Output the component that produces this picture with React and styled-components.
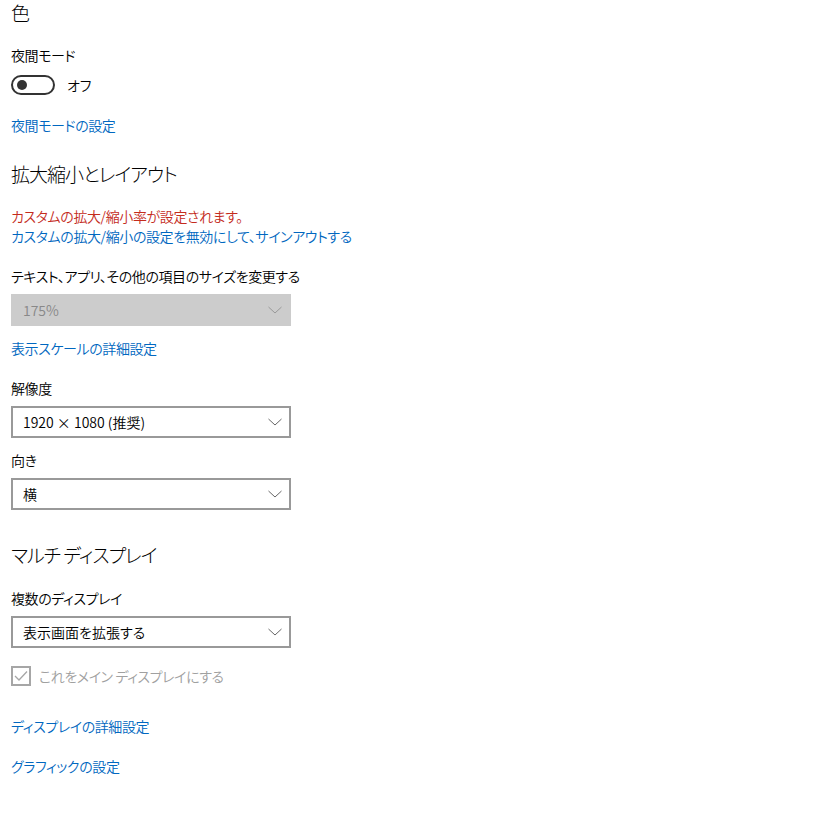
import React from 'react';
import styled, { createGlobalStyle } from 'styled-components';

const Global = createGlobalStyle`
    html, body {
        margin: 0;
        padding: 0;
        background: #fff;
    }
    body {
        font-family: "Noto Sans CJK JP", "Noto Sans", sans-serif;
        font-feature-settings: "palt";
        font-weight: 350;
        color: #000;
    }
`

const Page = styled.div`
    margin-top: -1px;
    padding: 0 0 40px 11px;
    width: 815px;
    box-sizing: border-box;
`

const Title = styled.h2`
    margin: ${p => p.top || 0}px 0 0;
    font-size: 19px;
    font-weight: 300;
    letter-spacing: -1px;
    line-height: 28px;
    height: 28px;
`

const Text = styled.div`
    margin-top: ${p => p.top || 0}px;
    font-size: 14px;
    letter-spacing: -0.4px;
    line-height: 20px;
    height: 20px;
    white-space: nowrap;
    color: ${p => p.color || '#000'};
`

const Link = styled.a`
    display: block;
    width: max-content;
    margin-top: ${p => p.top || 0}px;
    font-size: 14px;
    letter-spacing: -0.4px;
    line-height: 20px;
    height: 20px;
    color: #0067c0;
    text-decoration: none;
    cursor: pointer;
`

const ToggleRow = styled.div`
    display: flex;
    align-items: center;
    gap: 12px;
    margin-top: ${p => p.top || 0}px;
    height: 20px;
    font-size: 14px;
`

const Toggle = styled.div`
    width: 44px;
    height: 20px;
    box-sizing: border-box;
    border: 2px solid #333;
    border-radius: 10px;
    display: flex;
    align-items: center;
    padding-left: 4px;

    &::before {
        content: "";
        width: 10px;
        height: 10px;
        border-radius: 50%;
        background: #333;
    }
`

const SelectBox = styled.div`
    margin-top: ${p => p.top || 0}px;
    width: 280px;
    height: 32px;
    box-sizing: border-box;
    border: 2px solid ${p => (p.disabled ? '#ccc' : '#999')};
    background: ${p => (p.disabled ? '#ccc' : '#fff')};
    color: ${p => (p.disabled ? '#888' : '#000')};
    display: flex;
    align-items: center;
    justify-content: space-between;
    padding: 0 6px 0 10px;
    font-size: 14px;
`

const CheckRow = styled.div`
    display: flex;
    align-items: center;
    gap: 8px;
    margin-top: ${p => p.top || 0}px;
    height: 20px;
    font-size: 14px;
    letter-spacing: -0.4px;
    color: #a0a0a0;
`

const CheckBox = styled.div`
    width: 20px;
    height: 20px;
    box-sizing: border-box;
    border: 2px solid #a6a6a6;
    display: flex;
    align-items: center;
    justify-content: center;
`

function Chevron({ color = '#666' }) {
    return (
        <svg width="16" height="10" viewBox="0 0 16 10">
            <path d="M1.5 2 L8 8 L14.5 2" fill="none" stroke={color} strokeWidth="1" />
        </svg>
    )
}

function Select({ value, disabled, top }) {
    return (
        <SelectBox disabled={disabled} top={top}>
            <span>{value}</span>
            <Chevron color={disabled ? '#999' : '#666'} />
        </SelectBox>
    )
}

export default function App() {
    return (
        <Page>
            <Global />
            <Title>色</Title>
            <Text top={18}>夜間モード</Text>
            <ToggleRow top={10}>
                <Toggle />
                <span>オフ</span>
            </ToggleRow>
            <Link top={20}>夜間モードの設定</Link>

            <Title top={25}>拡大縮小とレイアウト</Title>
            <Text top={18} color="#c42b1c">カスタムの拡大/縮小率が設定されます。</Text>
            <Link>カスタムの拡大/縮小の設定を無効にして、サインアウトする</Link>
            <Text top={20}>テキスト、アプリ、その他の項目のサイズを変更する</Text>
            <Select top={8} value="175%" disabled />
            <Link top={12}>表示スケールの詳細設定</Link>
            <Text top={20}>解像度</Text>
            <Select top={8} value="1920 × 1080 (推奨)" />
            <Text top={12}>向き</Text>
            <Select top={8} value="横" />

            <Title top={31}>マルチ ディスプレイ</Title>
            <Text top={19}>複数のディスプレイ</Text>
            <Select top={8} value="表示画面を拡張する" />
            <CheckRow top={18}>
                <CheckBox>
                    <svg width="14" height="12" viewBox="0 0 14 12">
                        <path d="M1 6 L5 10 L13 1.5" fill="none" stroke="#a6a6a6" strokeWidth="1.3" />
                    </svg>
                </CheckBox>
                <span>これをメイン ディスプレイにする</span>
            </CheckRow>
            <Link top={30}>ディスプレイの詳細設定</Link>
            <Link top={20}>グラフィックの設定</Link>
        </Page>
    );
}
